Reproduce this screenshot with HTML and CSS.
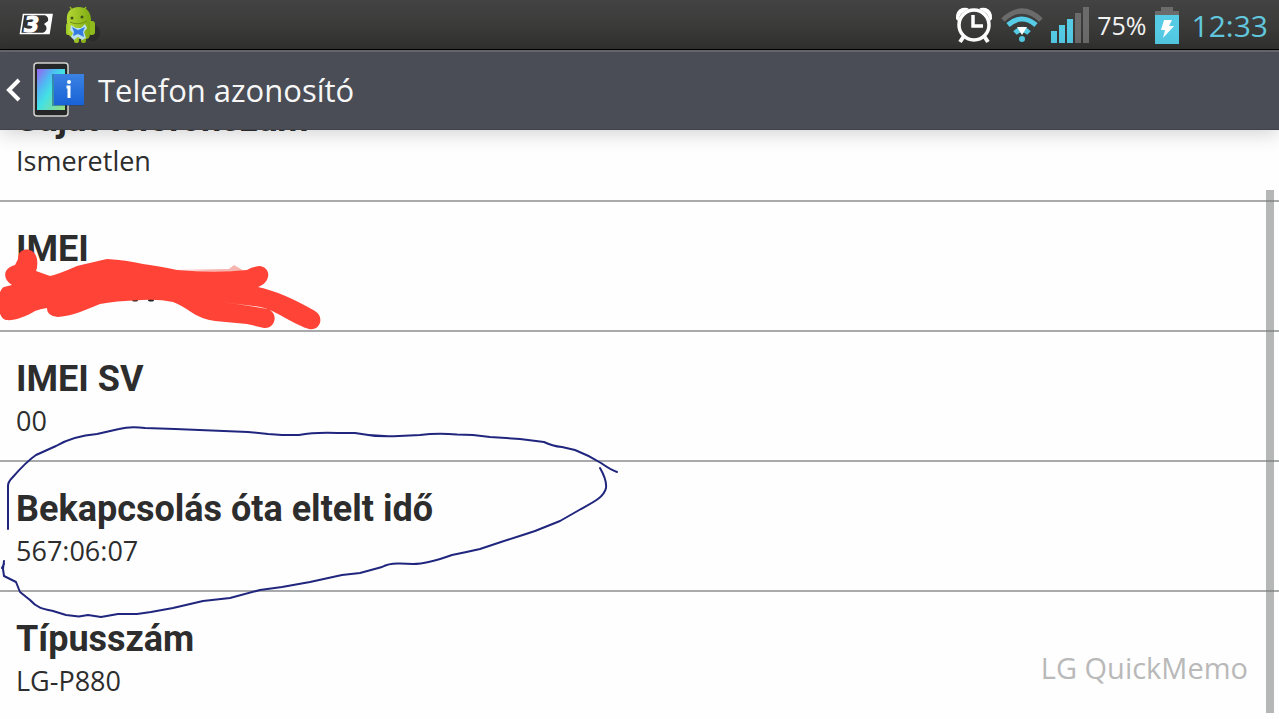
FILE: index.html
```html
<!DOCTYPE html>
<html lang="hu">
<head>
<meta charset="utf-8">
<title>Telefon azonosító</title>
<link rel="stylesheet" href="styles.css">
</head>
<body>
<div class="status-bar">
  <div class="notifications">
    <svg class="icon" width="34" height="24" viewBox="0 0 34 24" aria-label="3">
      <path d="M4.500 1.500H33L30 20.500H1.500Z" fill="#333" stroke="#fff" stroke-width="1.600"/>
      <path d="M26 2H33L30 20H24Q29 17 27 13L25 11L29 8Q30 4 26 2Z" fill="#fff"/>
      <text class="three" x="5" y="19">3</text>
    </svg>
    <svg class="icon" width="36" height="40" viewBox="0 0 36 40" aria-hidden="true">
      <defs><linearGradient id="droid" x2="1"><stop stop-color="#b5d935"/><stop offset="1" stop-color="#7faa12"/></linearGradient></defs>
      <ellipse cx="28" cy="28" rx="7" ry="8" fill="#222" opacity=".5"/>
      <path d="M5 2L8 6M21 2L19 5" stroke="#8eb51d" stroke-width="1.500"/>
      <path d="M2 18Q0 3 13 2Q27 2 26 18Z" fill="url(#droid)"/>
      <rect x="23" y="16" width="7" height="14" rx="3" fill="#8fbc1c"/>
      <rect x="1" y="18" width="5" height="12" rx="2" fill="#9dca27"/>
      <path d="M3 17H25V29Q25 34 21 34V36Q21 38 18 38Q16 38 16 36V34H14V36Q14 38 11 38Q9 38 9 36V33Q4 32 3 28Z" fill="url(#droid)"/>
      <path d="M5 17Q13 21 22 16" fill="none" stroke="#708f16" stroke-width="1"/>
      <circle cx="7" cy="13" r="1.500" fill="#405318"/><circle cx="17" cy="12" r="1.500" fill="#405318"/>
      <path d="M6 20L11 23H16L20 19L22 23L19 27L21 33L17 35L13 32L9 35L6 32L8 28L5 25Z" fill="#bce2ee"/>
      <path d="M7 22L13 25L20 22L18 27L19 32L13 29L8 31L9 27Z" fill="#347ce0"/>
    </svg>
  </div>
  <div class="system">
    <svg class="icon alarm" width="38" height="38" viewBox="0 0 38 38" aria-hidden="true">
      <g fill="none" stroke="#fff">
        <circle cx="19" cy="19" r="15" stroke-width="3.500"/>
        <path d="M18 9V20H28" stroke-width="3.500"/>
        <path d="M9 30L5 36M29 30L33 36" stroke-width="4"/>
      </g>
      <path d="M1 13Q0 5 7 2Q12 1 14 3Q5 6 3 15ZM37 13Q38 5 31 2Q26 1 24 3Q33 6 35 15Z" fill="#fff"/>
    </svg>
    <svg class="icon" width="42" height="36" viewBox="0 0 42 36" aria-hidden="true">
      <g fill="none" stroke-width="5">
        <path d="M2 13Q21 -5 40 13" stroke="#6b6b6b"/>
        <path d="M7 18Q21 6 35 18" stroke="#55cbe5"/>
        <path d="M14 26Q21 19 28 26" stroke="#55cbe5"/>
      </g>
      <circle cx="21" cy="32" r="3" fill="#55cbe5"/>
      <path d="M16 20H26L21 28Z" fill="#fff"/>
    </svg>
    <svg class="icon" width="38" height="36" viewBox="0 0 38 36" aria-hidden="true">
      <path d="M0 24H6V36H0ZM8 18H14V36H8ZM16 12H22V36H16Z" fill="#55cbe5"/>
      <path d="M24 6H30V36H24ZM32 0H38V36H32Z" fill="#6b6b6b"/>
    </svg>
    <span class="percent">75%</span>
    <svg class="icon" width="24" height="38" viewBox="0 0 24 38" aria-hidden="true">
      <path d="M6 1H18V5H24V9H0V5H6Z" fill="#6b6b6b"/>
      <path d="M0 9H24V38H0Z" fill="#55cbe5"/>
      <path d="M9 14H17L14 20H19L8 32L10 24H6Z" fill="#fff"/>
    </svg>
    <time class="clock">12:33</time>
  </div>
</div>
<header class="app-bar">
  <button class="back" aria-label="Vissza">
    <svg width="15" height="26" viewBox="0 0 15 26"><path d="M13 3L3 13L13 23" fill="none" stroke="#fff" stroke-width="4"/></svg>
    <svg width="54" height="58" viewBox="0 0 54 58">
      <defs>
        <linearGradient id="screen" x2="1" y2="1"><stop stop-color="#9a60ef"/><stop offset=".3" stop-color="#50b9f3"/><stop offset=".5" stop-color="#43e1e5"/><stop offset="1" stop-color="#9bdc7b"/></linearGradient>
        <linearGradient id="info" x2="0" y2="1"><stop stop-color="#3b82e2"/><stop offset="1" stop-color="#1762d6"/></linearGradient>
      </defs>
      <rect x="2" y="2" width="34" height="53" rx="3" fill="#242627" stroke="#d3d3cf" stroke-width="1.500"/>
      <rect x="5" y="8" width="28" height="41" fill="url(#screen)"/>
      <rect x="20" y="13" width="32" height="32" fill="#1b3f78" opacity=".5"/>
      <rect x="22" y="13" width="30" height="31" fill="url(#info)"/>
      <path d="M34.500 26H37V37" fill="none" stroke="#fff" stroke-width="3"/><circle cx="37" cy="21" r="2" fill="#fff"/>
    </svg>
  </button>
  <h1 class="page-title">Telefon azonosító</h1>
</header>
<main class="content">
  <dl class="list">
    <div class="row"><dt>Saját telefonszám</dt><dd>Ismeretlen</dd></div>
    <div class="row"><dt>IMEI</dt><dd></dd></div>
    <div class="row"><dt>IMEI SV</dt><dd>00</dd></div>
    <div class="row"><dt>Bekapcsolás óta eltelt idő</dt><dd>567:06:07</dd></div>
    <div class="row"><dt>Típusszám</dt><dd>LG-P880</dd></div>
  </dl>
  <div class="scrollbar"></div>
  <div class="watermark">LG QuickMemo</div>
</main>
<svg class="memo" width="640" height="640" viewBox="0 0 640 640" aria-hidden="true">
  <path d="M173 270L229 269L234 265L246 272Z" fill="#f5b5ae"/>
  <ellipse cx="135" cy="300" rx="3" ry="1.500" fill="#222"/><ellipse cx="151" cy="300" rx="3" ry="1.500" fill="#222"/>
  <path fill="#ff4337" d="M18 259C18 246 35 247 37 259Q38 266 36 271L50 276Q59 274 77 266Q94 262 107 259Q126 260 143 264Q164 267 177 270Q217 273 247 270Q251 267 259 266C272 267 271 283 258 287Q282 292 315 311C325 317 320 331 309 329Q301 327 280 315Q266 307 253 306L213 301Q239 304 267 309C279 312 276 329 264 328L247 324L215 321Q201 319 191 312Q181 305 173 302Q159 299 142 300Q114 301 100 304C87 309 74 316 58 317C50 316 47 313 47 308Q40 309 35 311C25 317 14 321 6 320C-4 318 -4 291 4 287L12 285C2 279 3 268 15 265Z"/>
  <g fill="none" stroke="#20267d" stroke-width="2" stroke-linejoin="round" stroke-linecap="round">
    <path d="M8 529V486Q8 482 12 478C19 470 27 461 36 455L56 446Q73 436 97 434L119 429Q130 426 145 428L175 429L248 432L268 434L282 435H299Q315 432 338 433L355 433C370 436 383 437 399 436L420 435Q437 433 457 434.500L473 435L490 437L520 439L544 442Q552 446 562 447L575 450Q588 455 601 463Q611 470 617 472"/>
    <path d="M600 468Q607 480 606 488C604 497 594 502 581 509L560 521L535 531Q520 536 501 542L480 549Q467 552 452 555C438 560 425 564 413 564L400 563.500Q389 563 382 567L360 573L342 575L310 582L282 587L260 590L230 598L203 601L173 608L151 612L137 614L118 614L101 617L88 615L79 616.500L66 615L53 611C43 609 37 608 30 600L20 592L16 582L4 576L3 569L4 561M4 564L2 568"/>
  </g>
</svg>
</body>
</html>
```
FILE: styles.css
```css
* { box-sizing: border-box; }
body {
  margin: 0;
  height: 100vh;
  display: flex;
  flex-direction: column;
  overflow: hidden;
  position: relative;
  background: #fefefe;
  color: #2d2d2d;
  font-family: "Open Sans", "Noto Sans", sans-serif;
}
svg { display: block; flex: none; }
.status-bar {
  flex: none;
  height: 50px;
  display: flex;
  justify-content: space-between;
  align-items: center;
  padding: 1px 11px 0 19px;
  background: linear-gradient(#434343, #323331);
  border-bottom: 1px solid #000;
}
.notifications, .system { display: flex; align-items: center; }
.notifications { gap: 12px; }
.system { gap: 8px; }
.three { font: italic 900 22px "DejaVu Sans", sans-serif; fill: #fff; stroke: #fff; stroke-width: 1px; }
.percent { font-size: 25px; color: #f2f2f2; }
.clock { font-size: 30px; color: #62c8df; margin-left: 5px; }
.app-bar {
  flex: none;
  height: 80px;
  display: flex;
  align-items: center;
  gap: 12px;
  padding: 0 0 2px 6px;
  background: #4a4d55;
  border-top: 2px solid #62656b;
  border-bottom: 1px solid #414349;
  box-shadow: 0 2px 20px rgba(0, 0, 0, .2);
  z-index: 1;
}
.back {
  display: flex;
  align-items: center;
  gap: 11px;
  padding: 0;
  border: 0;
  background: none;
}
.page-title { margin: 0; font-size: 31px; font-weight: 400; color: #f7f7f7; }
.content { flex: 1; min-height: 0; overflow: hidden; position: relative; }
.list { margin: -58px 0 0; }
.row { padding: 25px 16px 19px; border-bottom: 2px solid #a7a9aa; }
dt { font-family: Roboto, "Open Sans", sans-serif; font-size: 36px; font-weight: 700; line-height: 44px; }
dd { margin: 0; font-size: 27px; line-height: 40px; min-height: 40px; }
.scrollbar {
  position: absolute;
  top: 60px;
  right: 5px;
  bottom: 6px;
  width: 8px;
  background: rgba(120, 124, 122, .55);
}
.watermark {
  position: absolute;
  right: 31px;
  bottom: 31px;
  font-size: 29px;
  line-height: 40px;
  color: #b9b9b9;
}
.memo { position: absolute; left: 0; top: 0; z-index: 2; pointer-events: none; }
```
